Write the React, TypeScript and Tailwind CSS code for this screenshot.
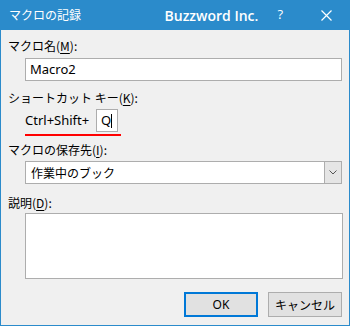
const jp = { fontFamily: '"Noto Sans CJK JP", "Noto Sans", sans-serif' };

function Label({ text, k }: { text: string; k: string }) {
  return (
    <div className="h-[16px] text-[12px] leading-[16px] text-[#000]" style={jp}>
      {text}(<span className="underline underline-offset-2">{k}</span>):
    </div>
  );
}

export default function App() {
  return (
    <div className="w-[350px] h-[327px] bg-white">
      <div className="w-[350px] h-[326px] flex flex-col bg-[#f0f0f0] border-x border-b border-[#2b8bcb]">
        <div className="h-[30px] -mx-px bg-[#2b8bcb] flex items-center text-white">
          <span className="ml-[9px] text-[12px]" style={jp}>マクロの記録</span>
          <span className="ml-auto text-[14px] font-semibold" style={{ fontFamily: '"Open Sans", sans-serif' }}>
            Buzzword Inc.
          </span>
          <span className="ml-[19px] text-[13px]" style={{ fontFamily: '"Open Sans", sans-serif' }}>?</span>
          <svg className="ml-[38px] mr-[18px]" width="11" height="11" viewBox="0 0 11 11">
            <path d="M0.5 0.5L10.5 10.5M10.5 0.5L0.5 10.5" stroke="white" strokeWidth="1.2" />
          </svg>
        </div>
        <div className="flex flex-col pl-[7px] pt-[8px]">
          <Label text="マクロ名" k="M" />
          <div className="ml-[17px] mt-[4px] w-[317px] h-[23px] bg-white border border-[#adadad] flex items-center pl-[4px] text-[13px]" style={{ fontFamily: '"Noto Sans", sans-serif' }}>
            Macro2
          </div>
          <div className="mt-[9px]">
            <Label text="ショートカット キー" k="K" />
          </div>
          <div className="ml-[17px] mt-[3px] flex items-center h-[23px]">
            <span className="text-[13px] w-[71px]" style={{ fontFamily: '"Noto Sans", sans-serif' }}>Ctrl+Shift+</span>
            <div className="w-[22px] h-[23px] bg-white border border-[#adadad] flex items-center pl-[4px] text-[13px]" style={{ fontFamily: '"Noto Sans", sans-serif' }}>
              Q<span className="w-px h-[14px] bg-black" />
            </div>
          </div>
          <div className="ml-[17px] mt-[2px] w-[96px] h-[2px] bg-[#ff0000]" />
          <div className="mt-[6px]">
            <Label text="マクロの保存先" k="I" />
          </div>
          <div className="ml-[17px] mt-[3px] w-[317px] h-[23px] bg-white border border-[#adadad] flex items-center">
            <span className="pl-[5px] text-[12px] flex-1" style={jp}>作業中のブック</span>
            <div className="w-[17px] h-full bg-[#e5e5e5] border-l border-[#adadad] flex items-center justify-center">
              <svg width="8" height="5" viewBox="0 0 8 5">
                <path d="M0.5 0.5L4 4L7.5 0.5" fill="none" stroke="#555" strokeWidth="1" />
              </svg>
            </div>
          </div>
          <div className="mt-[11px]">
            <Label text="説明" k="D" />
          </div>
          <div className="ml-[17px] mt-[2px] w-[318px] h-[66px] bg-white border border-[#adadad]" />
          <div className="mt-[13px] flex gap-[10px] ml-[176px]">
            <div className="w-[74px] h-[25px] bg-[#e1e1e1] border-2 border-[#0078d7] flex items-center justify-center text-[12px]" style={{ fontFamily: '"Noto Sans", sans-serif' }}>
              OK
            </div>
            <div className="w-[74px] h-[25px] bg-[#e1e1e1] border border-[#adadad] flex items-center justify-center text-[12px]" style={jp}>
              キャンセル
            </div>
          </div>
        </div>
      </div>
    </div>
  );
}
